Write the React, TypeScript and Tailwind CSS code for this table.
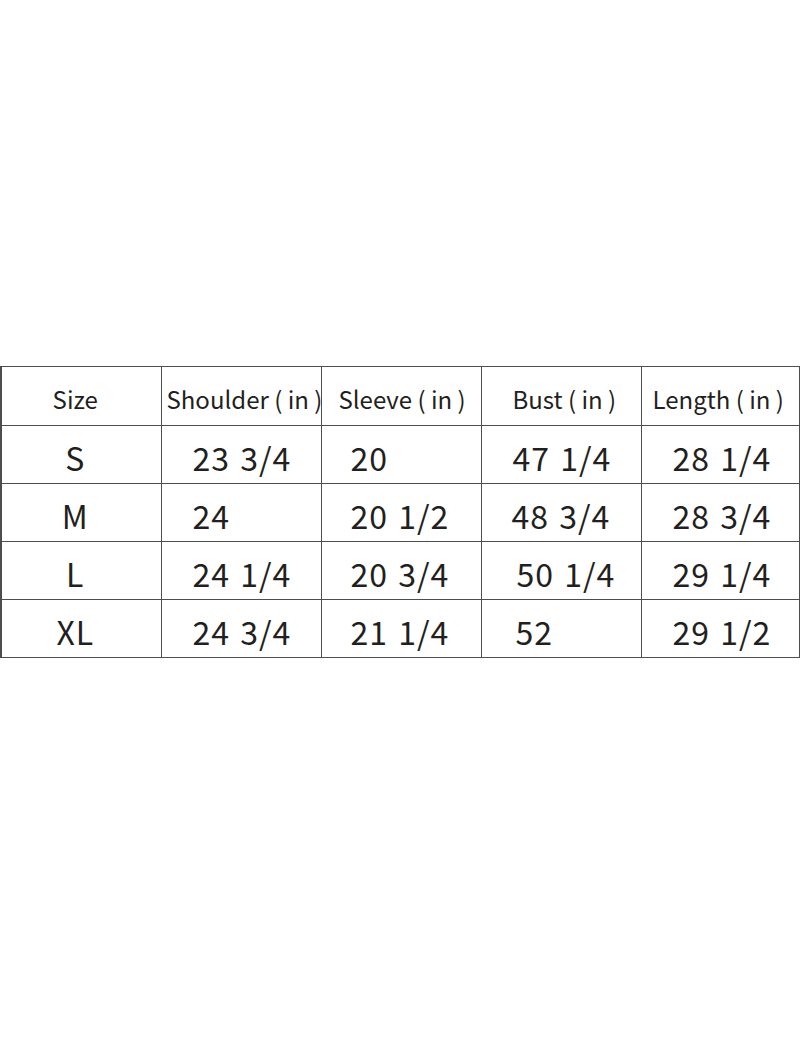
import React from 'react';

const headers = [
  { label: 'Size', cls: 'text-center pr-[12px]' },
  { label: 'Shoulder ( in )', cls: 'text-left pl-[5px]' },
  { label: 'Sleeve ( in )', cls: 'text-left pl-[17px]' },
  { label: 'Bust ( in )', cls: 'text-left pl-[31px]' },
  { label: 'Length ( in )', cls: 'text-left pl-[11px]' },
];

// size, shoulder, sleeve, bust, length (the bust indent shifts a little per row)
const rows = [
  { size: 'S', vals: ['23 3/4', '20', '47 1/4', '28 1/4'], bust: 'pl-[31px]' },
  { size: 'M', vals: ['24', '20 1/2', '48 3/4', '28 3/4'], bust: 'pl-[30px]' },
  { size: 'L', vals: ['24 1/4', '20 3/4', '50 1/4', '29 1/4'], bust: 'pl-[35px]' },
  { size: 'XL', vals: ['24 3/4', '21 1/4', '52', '29 1/2'], bust: 'pl-[34px]' },
];

const font = { fontFamily: '"Noto Sans CJK SC", "Liberation Sans", sans-serif' };

const cell =
  'border border-[#4d4d4d] text-[32px] leading-none pt-[5px] whitespace-nowrap tracking-[1px] [word-spacing:2px]';

export default function App() {
  return (
    <div className="w-[800px] h-[1050px] bg-white text-[#231f20]" style={font}>
      <div className="h-[366px]" />
      <table className="w-[798px] border-collapse table-fixed">
        <colgroup>
          <col className="w-[160px]" />
          <col className="w-[160px]" />
          <col className="w-[160px]" />
          <col className="w-[160px]" />
          <col className="w-[158px]" />
        </colgroup>
        <thead>
          <tr className="h-[59px]">
            {headers.map((h) => (
              <th
                key={h.label}
                className={`border border-[#4d4d4d] first:border-l-2 font-normal text-[24px] leading-none pt-[6px] whitespace-nowrap ${h.cls}`}
              >
                {h.label}
              </th>
            ))}
          </tr>
        </thead>
        <tbody>
          {rows.map((r) => (
            <tr key={r.size} className="h-[58px]">
              <td className={`${cell} border-l-2 text-center pr-[12px]`}>{r.size}</td>
              <td className={`${cell} pl-[31px]`}>{r.vals[0]}</td>
              <td className={`${cell} pl-[29px]`}>{r.vals[1]}</td>
              <td className={`${cell} ${r.bust}`}>{r.vals[2]}</td>
              <td className={`${cell} pl-[31px]`}>{r.vals[3]}</td>
            </tr>
          ))}
        </tbody>
      </table>
    </div>
  );
}
